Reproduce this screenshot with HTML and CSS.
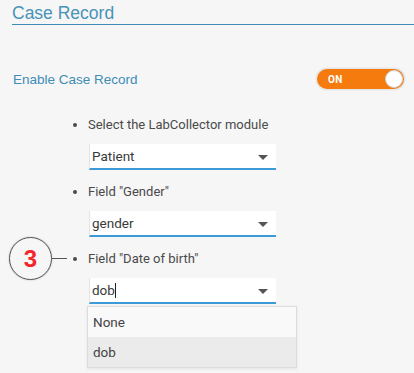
FILE: index.html
```html
<!DOCTYPE html>
<html>
<head>
<meta charset="utf-8">
<link rel="stylesheet" href="styles.css">
</head>
<body>
<div class="page">
  <h1 class="title">Case Record</h1>
  <div class="enable-row">
    <span class="enable-label">Enable Case Record</span>
    <div class="toggle">
      <span class="toggle-text">ON</span>
      <span class="knob"></span>
    </div>
  </div>
  <ul class="steps">
    <li class="step">
      <div class="step-label">Select the LabCollector module</div>
      <div class="select"><span class="select-value">Patient</span><span class="caret"></span></div>
    </li>
    <li class="step">
      <div class="step-label">Field "Gender"</div>
      <div class="select"><span class="select-value">gender</span><span class="caret"></span></div>
    </li>
    <li class="step step-open">
      <div class="callout"><span class="callout-num">3</span><span class="callout-line"></span></div>
      <div class="step-label">Field "Date of birth"</div>
      <div class="select"><span class="select-value">dob<span class="cursor"></span></span><span class="caret"></span></div>
      <div class="menu">
        <div class="menu-item">None</div>
        <div class="menu-item menu-item-active">dob</div>
      </div>
    </li>
  </ul>
</div>
</body>
</html>
```

FILE: styles.css
```css
html, body {
  margin: 0;
  padding: 0;
  background: #f6f6f6;
}
.page {
  width: 414px;
  height: 373px;
  overflow: hidden;
  font-family: "Liberation Sans", Arial, sans-serif;
}
.title {
  margin: 0 0 0 12px;
  padding: 3px 0 0 0;
  height: 21px;
  font-size: 17.5px;
  font-weight: normal;
  line-height: 20px;
  color: #4893b8;
  border-bottom: 1px solid #3f8db5;
}
.enable-row {
  display: flex;
  align-items: center;
  justify-content: space-between;
  margin-top: 43px;
  padding: 0 10px 0 13px;
  height: 22px;
}
.enable-label {
  font-size: 13.5px;
  color: #3d8db5;
}
.toggle {
  position: relative;
  width: 87px;
  height: 20px;
  border-radius: 11px;
  background: #f57b0e;
  box-shadow: 0 0 0 1.5px #e6e6e6;
  display: flex;
  align-items: center;
}
.toggle-text {
  margin-left: 11px;
  font-family: Roboto, "Liberation Sans", sans-serif;
  font-size: 10px;
  font-weight: bold;
  color: #fff;
  letter-spacing: 0.3px;
}
.knob {
  position: absolute;
  right: 1px;
  top: 1px;
  width: 16px;
  height: 16px;
  border-radius: 50%;
  background: #fff;
  border: 1px solid #d0d0d0;
}
.steps {
  margin: 25px 0 0 0;
  padding: 0 0 0 88px;
  font-family: Roboto, "Liberation Sans", sans-serif;
  font-size: 13px;
  color: #4a4a4a;
  list-style: disc;
}
.step {
  position: relative;
  margin-bottom: 12px;
}
.step-label {
  height: 20px;
  line-height: 20px;
  margin-bottom: 9px;
}
.select {
  width: 186px;
  height: 24px;
  margin-left: 1px;
  background: #fff;
  border-left: 1px solid #e4e4e4;
  border-bottom: 2px solid #3d9ad6;
  display: flex;
  align-items: center;
  justify-content: space-between;
  box-sizing: content-box;
}
.select-value {
  margin-left: 2px;
  color: #3a3a3a;
  font-size: 13.5px;
  display: flex;
  align-items: center;
}
.cursor {
  display: inline-block;
  width: 1px;
  height: 15px;
  background: #222;
}
.caret {
  width: 0;
  height: 0;
  margin-right: 8px;
  margin-top: 2px;
  border-left: 5px solid transparent;
  border-right: 5px solid transparent;
  border-top: 5px solid #555;
}
.menu {
  position: absolute;
  left: -1px;
  top: 57px;
  width: 208px;
  background: #f9f9f9;
  border: 1px solid #dcdcdc;
  box-shadow: 0 1px 3px rgba(0,0,0,0.08);
}
.menu-item {
  height: 30px;
  line-height: 30px;
  padding-left: 5px;
  color: #444;
  font-size: 13.5px;
}
.menu-item-active {
  background: #ebebeb;
}
.callout {
  position: absolute;
  left: -79px;
  top: -12px;
  display: flex;
  align-items: center;
}
.callout-num {
  width: 41px;
  height: 41px;
  border-radius: 50%;
  border: 1.5px solid #555;
  box-shadow: 0 0 2px rgba(0,0,0,0.25);
  display: flex;
  align-items: center;
  justify-content: center;
  font-family: "Liberation Sans", Arial, sans-serif;
  font-size: 24px;
  font-weight: bold;
  color: #f2262b;
  background: #f6f6f6;
}
.callout-line {
  width: 15px;
  height: 1.5px;
  background: #555;
}
```
